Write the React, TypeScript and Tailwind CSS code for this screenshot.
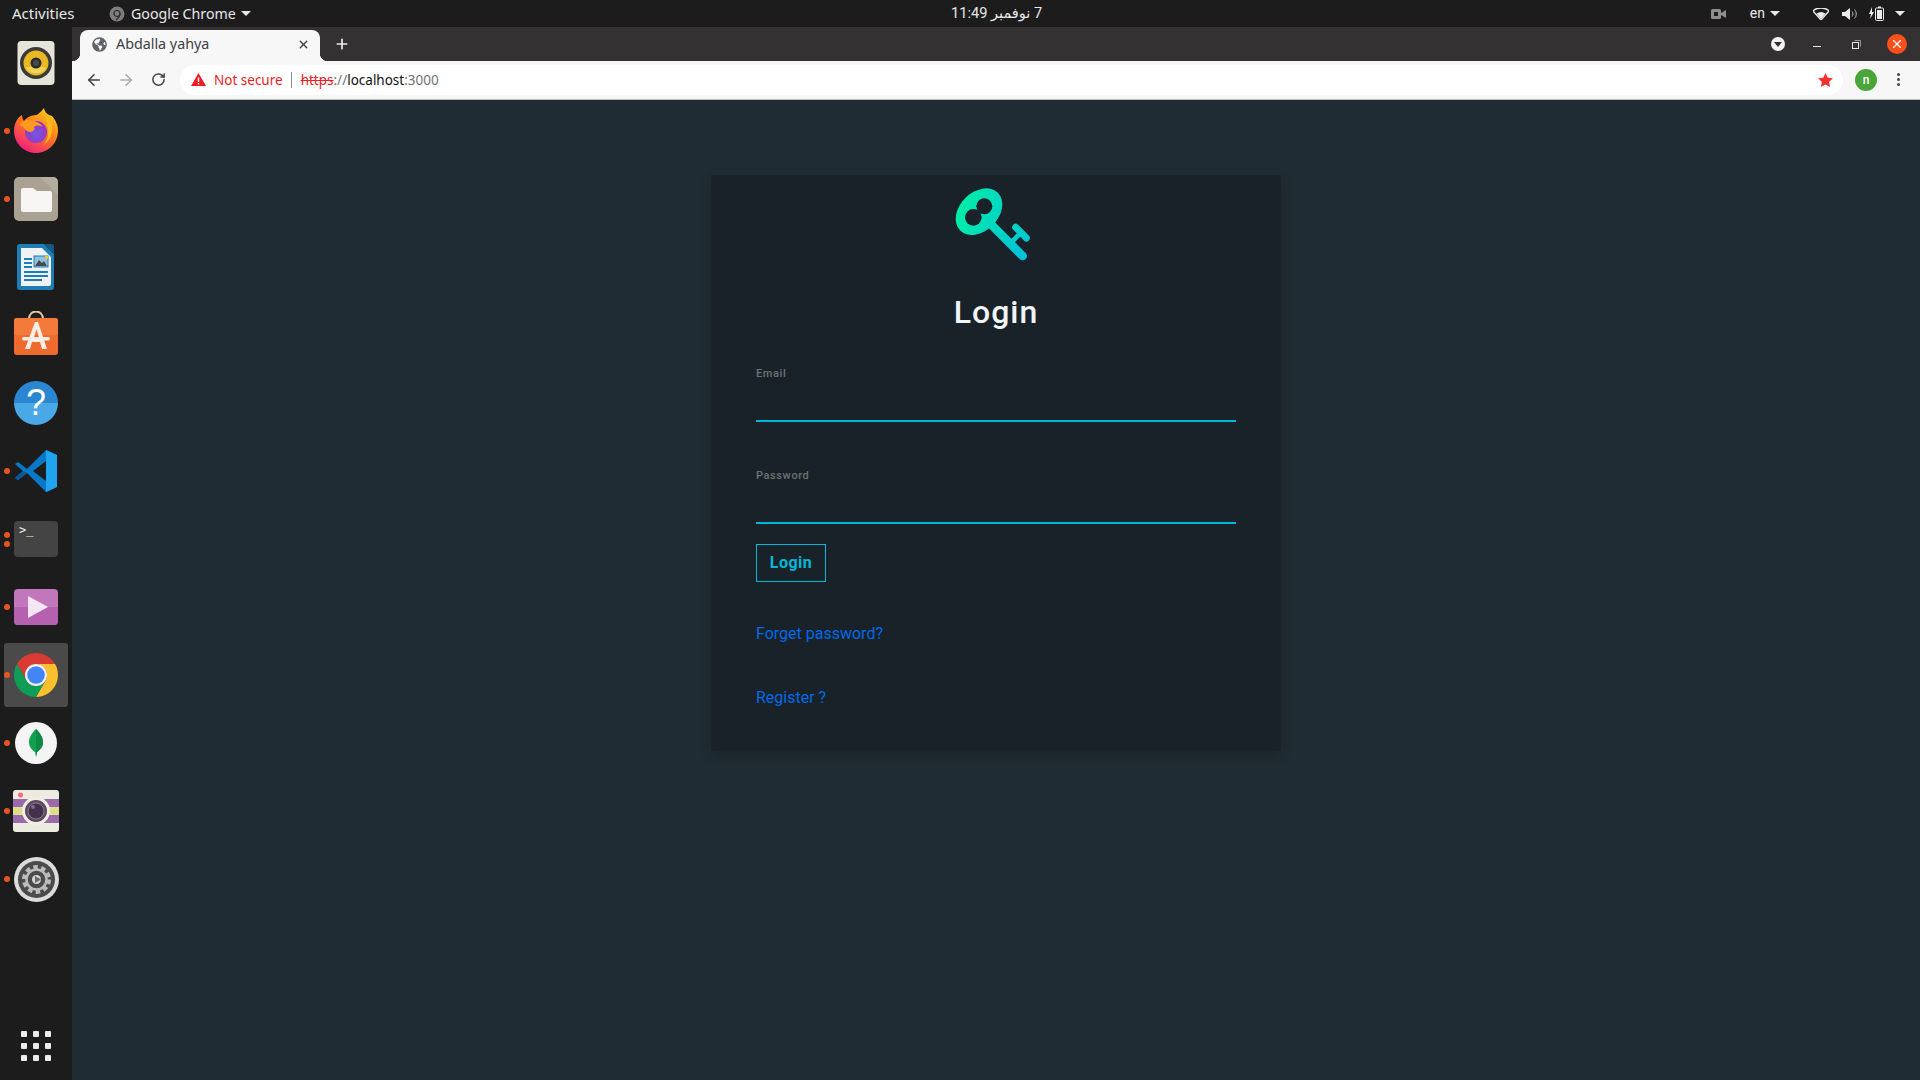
import React from "react";
import { FaGlobeAmericas } from "react-icons/fa";
import { ArrowLeft, ArrowRight, RotateCw, X, Plus } from "lucide-react";

const Caret = ({ className = "" }: { className?: string }) => (
  <svg width="10" height="5" viewBox="0 0 10 5" className={className}>
    <path d="M0 0h10L5 5z" fill="#e8e8e8" />
  </svg>
);

const Rhythmbox = () => (
  <svg width="44" height="44" viewBox="0 0 44 44">
    <rect x="3.5" y="0" width="37" height="44" rx="4" fill="#e6e3d9" />
    <circle cx="22" cy="22" r="16" fill="#3a3a3a" />
    <circle cx="22" cy="22" r="12.5" fill="#e8b923" />
    <path d="M12 26a11 11 0 0 0 20 0z" fill="#f3d25a" />
    <circle cx="22" cy="22" r="5.5" fill="#2b2b2b" />
    <circle cx="22" cy="22" r="3" fill="#4a4a4a" />
  </svg>
);

const Firefox = () => (
  <svg width="46" height="46" viewBox="0 0 46 46" className="-mt-[2px]">
    <defs>
      <linearGradient id="ff" x1="0.8" y1="0" x2="0.2" y2="1">
        <stop offset="0" stopColor="#ffd21f" />
        <stop offset="0.45" stopColor="#ff7a1a" />
        <stop offset="1" stopColor="#f0148c" />
      </linearGradient>
      <radialGradient id="ffp" cx="0.5" cy="0.6" r="0.6">
        <stop offset="0" stopColor="#6d5be0" />
        <stop offset="1" stopColor="#a02fc0" />
      </radialGradient>
    </defs>
    <path d="M31 1c1 5 4 7 8 8 4 5 6 9 6 15 0 12-10 22-22 22S1 36 1 24C1 17 4 11 9 8c0 3 1 5 2 6 3-4 8-6 13-6 2-2 5-4 7-7z" fill="url(#ff)" />
    <circle cx="23" cy="25" r="11" fill="url(#ffp)" />
    <path d="M6 18c4-5 10-6 15-4 4 1 7 3 9 6-4-2-7-2-9 0 1 2 0 4-3 5-3 0-6-2-7-4-2-2-3-3-5-3z" fill="#ff9a1f" />
    <path d="M33 8c4 4 7 9 6 16-1 7-4 11-9 14 4-4 6-9 5-15-1-6-2-10-2-15z" fill="#ffb81f" />
  </svg>
);

const Files = () => (
  <svg width="44" height="44" viewBox="0 0 44 44">
    <rect width="44" height="44" rx="5" fill="#a9a292" />
    <path d="M26 0h13a5 5 0 0 1 5 5v13L26 0z" fill="#b5ae9e" />
    <path d="M7 13a2 2 0 0 1 2-2h10l4 3h13a2 2 0 0 1 2 2v17a2 2 0 0 1-2 2H9a2 2 0 0 1-2-2z" fill="#f6f5f3" />
  </svg>
);

const Writer = () => (
  <svg width="38" height="46" viewBox="0 0 38 46">
    <path d="M3 0h24l10 10v33a3 3 0 0 1-3 3H3a3 3 0 0 1-3-3V3a3 3 0 0 1 3-3z" fill="#1c7eb5" />
    <path d="M4 4h21l9 9v27a2 2 0 0 1-2 2H4z" fill="#f0f1f3" />
    <path d="M27 0l10 10V2a2 2 0 0 0-2-2z" fill="#14577f" />
    <rect x="7" y="14" width="8" height="2" fill="#1c7eb5" />
    <rect x="7" y="18" width="8" height="2" fill="#1c7eb5" />
    <rect x="7" y="22" width="8" height="2" fill="#1c7eb5" />
    <rect x="17" y="12" width="14" height="11" fill="#8fc1e3" stroke="#1c7eb5" />
    <path d="M18 22l4-6 3 3 2-2 3 5z" fill="#4a4a4a" />
    <rect x="28" y="12" width="3" height="3" fill="#f2c230" />
    <rect x="7" y="27" width="24" height="2" fill="#1c7eb5" />
    <rect x="7" y="31" width="24" height="2" fill="#1c7eb5" />
    <rect x="7" y="35" width="18" height="2" fill="#1c7eb5" />
  </svg>
);

const Software = () => (
  <svg width="44" height="44" viewBox="0 0 44 44" className="-mt-[4px]">
    <path d="M15 8c0-10 14-10 14 0" fill="none" stroke="#e8c8a0" strokeWidth="2" />
    <path d="M3 7h38a3 3 0 0 1 3 3v31a3 3 0 0 1-3 3H3a3 3 0 0 1-3-3V10a3 3 0 0 1 3-3z" fill="#ef6a2e" />
    <path d="M0 24V10a3 3 0 0 1 3-3h38a3 3 0 0 1 3 3v14z" fill="#f47a3c" />
    <path d="M21 11h3l9 27h-5l-2-7h-8l-2 7h-5z M22.500 18l-3 10h6z" fill="#fbeee6" fillRule="evenodd" />
    <rect x="8" y="26" width="28" height="3.500" rx="1.700" fill="#fbeee6" />
  </svg>
);

const Help = () => (
  <div className="relative flex h-[44px] w-[44px] items-center justify-center overflow-hidden rounded-full bg-[linear-gradient(180deg,#2a86d0_0%,#2a86d0_50%,#49a8e6_50%,#49a8e6_100%)]">
    <span className="text-[36px] leading-none text-white [font-family:'Liberation_Sans',sans-serif]">?</span>
  </div>
);

const VSCode = () => (
  <svg width="44" height="44" viewBox="0 0 44 44">
    <path d="M32 1L13 20 4 13 1 15l8 7-8 7 3 2 9-7 19 19 11-5V6z" fill="#0a78c8" />
    <path d="M32 1l11 5v32l-11 5z" fill="#1fa5f0" />
    <path d="M32 12L19 22l13 10z" fill="#1c1c1c" />
    <path d="M1 29l8-7 4 2-9 7z" fill="#075a9a" />
  </svg>
);

const Terminal = () => (
  <div className="flex h-[36px] w-[44px] flex-col rounded-[4px] bg-[#444444] pl-[5px] pt-[2px]">
    <span className="text-[12px] leading-[14px] text-[#f0f0f0] [font-family:'DejaVu_Sans_Mono',monospace]">&gt;_</span>
  </div>
);

const Totem = () => (
  <svg width="44" height="36" viewBox="0 0 44 36">
    <rect width="44" height="36" rx="4" fill="#c277bd" />
    <path d="M0 18h44v14a4 4 0 0 1-4 4H4a4 4 0 0 1-4-4z" fill="#b561b0" />
    <path d="M14 7l20 11-20 11z" fill="#f5e6f3" />
  </svg>
);

const Chrome = () => (
  <svg width="44" height="44" viewBox="4 4 40 40">
    <path d="M6.680 14A20 20 0 0 1 41.320 14H24A10 10 0 0 0 15.340 29z" fill="#d93a32" />
    <path d="M41.320 14A20 20 0 0 1 24 44L32.660 29A10 10 0 0 0 24 14z" fill="#fbc02d" />
    <path d="M24 44A20 20 0 0 1 6.680 14L15.340 29A10 10 0 0 0 32.660 29z" fill="#0f9d58" />
    <circle cx="24" cy="24" r="10" fill="#f1f1f1" />
    <circle cx="24" cy="24" r="8" fill="#4285f4" />
  </svg>
);

const Mongo = () => (
  <svg width="42" height="42" viewBox="0 0 42 42">
    <circle cx="21" cy="21" r="21" fill="#f4f4f4" />
    <path d="M21 7c5 5 7 9 7 13 0 5-3 8-6 10l-1 5-1-5c-3-2-6-5-6-10 0-4 2-8 7-13z" fill="#12a150" />
    <path d="M21 7c5 5 7 9 7 13 0 5-3 8-6 10l-1 5z" fill="#0f8a44" />
  </svg>
);

const Camera = () => (
  <svg width="46" height="42" viewBox="0 0 46 42">
    <rect width="46" height="42" rx="3" fill="#ecebdf" />
    <rect y="9" width="46" height="8" fill="#9a6aad" />
    <rect y="17" width="46" height="8" fill="#e0dc8e" />
    <rect y="25" width="46" height="8" fill="#9a6aad" />
    <circle cx="7.500" cy="5" r="2.500" fill="#f76a78" />
    <circle cx="23" cy="21" r="14" fill="#f1efe2" />
    <circle cx="23" cy="21" r="11" fill="#5c4a60" />
    <circle cx="23" cy="21" r="8" fill="#43304c" stroke="#8d7895" strokeWidth="1" />
    <circle cx="20" cy="17" r="2" fill="#806b88" />
  </svg>
);

const Settings = () => (
  <svg width="45" height="45" viewBox="0 0 45 45">
    <circle cx="22.500" cy="22.500" r="22.500" fill="#dcdcdc" />
    <circle cx="22.500" cy="22.500" r="18.500" fill="#4b4b4b" />
    <circle cx="22.500" cy="22.500" r="12.500" fill="none" stroke="#bcbcbc" strokeWidth="4" strokeDasharray="4.500 3.400" />
    <circle cx="22.500" cy="22.500" r="10" fill="none" stroke="#bcbcbc" strokeWidth="2.500" />
    <circle cx="22.500" cy="22.500" r="4.500" fill="#d4d4d4" />
    <path d="M21 19l6 3.500-6 3.500z" fill="#6a6a6a" />
  </svg>
);

const Dot = ({ top }: { top: number }) => (
  <span className="absolute left-[4px] h-[6px] w-[6px] rounded-full bg-[#e95420]" style={{ top }} />
);

const dockItems: { icon: React.ReactNode; dots: number[]; active?: boolean }[] = [
  { icon: <Rhythmbox />, dots: [] },
  { icon: <Firefox />, dots: [31] },
  { icon: <Files />, dots: [31] },
  { icon: <Writer />, dots: [] },
  { icon: <Software />, dots: [] },
  { icon: <Help />, dots: [] },
  { icon: <VSCode />, dots: [31] },
  { icon: <Terminal />, dots: [27, 36] },
  { icon: <Totem />, dots: [31] },
  { icon: <Chrome />, dots: [31], active: true },
  { icon: <Mongo />, dots: [31] },
  { icon: <Camera />, dots: [31] },
  { icon: <Settings />, dots: [31] },
];

const Dock = () => (
  <aside className="flex w-[72px] shrink-0 flex-col bg-[#1c1c1c] pt-[2px]">
    {dockItems.map((it, i) => (
      <div key={i} className="relative flex h-[68px] items-center justify-center">
        {it.active && <span className="absolute left-[4px] top-[2px] h-[64px] w-[64px] rounded-[3px] bg-[#4a4a4a]" />}
        {it.dots.map((t) => (
          <Dot key={t} top={t} />
        ))}
        <div className="relative flex items-center justify-center">{it.icon}</div>
      </div>
    ))}
    <div className="mt-auto mb-[19px] grid grid-cols-3 gap-[6px] self-center">
      {Array.from({ length: 9 }).map((_, i) => (
        <span key={i} className="h-[6px] w-[6px] rounded-[1px] bg-[#ececec]" />
      ))}
    </div>
  </aside>
);

const TopBar = () => (
  <header className="relative flex h-[27px] shrink-0 items-center bg-[#1c1c1c] text-[14px] text-[#e8e8e8] [font-family:'Noto_Sans',sans-serif]">
    <span className="ml-[12px] w-[63px] whitespace-nowrap text-[15px]">Activities</span>
    <svg width="16" height="16" viewBox="0 0 16 16" className="ml-[34px]">
      <circle cx="8" cy="8" r="7.500" fill="#7d7d7d" />
      <circle cx="8" cy="7.500" r="3" fill="none" stroke="#2b2b2b" strokeWidth="1.200" />
      <path d="M11 7.500c0 3-2 5-4 6.500" fill="none" stroke="#2b2b2b" strokeWidth="1.200" />
    </svg>
    <span className="ml-[6px] whitespace-nowrap text-[14.200px]">Google Chrome</span>
    <Caret className="ml-[5px]" />
    <span dir="rtl" className="absolute left-[951px] whitespace-nowrap text-[14.600px] [font-family:'Roboto','DejaVu_Sans',sans-serif]">
      7 نوفمبر 11:49
    </span>
    <div className="ml-auto flex items-center">
      <svg width="15" height="10" viewBox="0 0 15 10">
        <rect width="10" height="10" rx="1.500" fill="#8e8e8e" />
        <rect x="3" y="3" width="4" height="4" fill="#1c1c1c" />
        <path d="M10 4l5-3v8l-5-3z" fill="#8e8e8e" />
      </svg>
      <span className="ml-[24px] text-[14px] [font-family:'Roboto',sans-serif]">en</span>
      <Caret className="ml-[5px]" />
      <svg width="16" height="12" viewBox="0 0 16 12" className="ml-[33px]">
        <path d="M0 3c4-4 12-4 16 0l-8 9z" fill="none" stroke="#ececec" strokeWidth="1.400" />
        <path d="M3.500 5.500c3-2 6-2 9 0L8 11z" fill="#ececec" />
      </svg>
      <svg width="15" height="12" viewBox="0 0 15 12" className="ml-[13px]">
        <path d="M0 4h3l5-4v12l-5-4H0z" fill="#ececec" />
        <path d="M10 3.500c1.300 1.500 1.300 3.500 0 5M12.500 1.500c2.300 2.500 2.300 6.500 0 9" fill="none" stroke="#bdbdbd" strokeWidth="1" />
      </svg>
      <svg width="15" height="15" viewBox="0 0 15 15" className="ml-[12px]">
        <path d="M3 1L0 8h2l-1 5 4-7H3z" fill="#ececec" />
        <rect x="6.500" y="2" width="8" height="12.500" rx="1" fill="none" stroke="#ececec" />
        <rect x="9" y="0.500" width="3" height="1.500" fill="#ececec" />
        <rect x="8" y="4" width="5" height="9" fill="#ececec" />
      </svg>
      <Caret className="ml-[11px] mr-[15px]" />
    </div>
  </header>
);

const TabStrip = () => (
  <div className="flex h-[34px] shrink-0 items-end bg-[#333131] pl-[8px]">
    <div className="relative flex h-[31px] w-[240px] items-center rounded-t-[8px] bg-[#f7f7f7] pb-[3px] pl-[12px] text-[#3c4043] [font-family:'Noto_Sans',sans-serif]">
      <span className="absolute bottom-0 left-[-8px] h-[8px] w-[8px] bg-[radial-gradient(circle_at_0_0,#333131_8px,#f7f7f7_8.500px)]" />
      <span className="absolute bottom-0 right-[-8px] h-[8px] w-[8px] bg-[radial-gradient(circle_at_100%_0,#333131_8px,#f7f7f7_8.500px)]" />
      <FaGlobeAmericas size={15} color="#5f6368" />
      <span className="ml-[9px] whitespace-nowrap text-[14.300px]">Abdalla yahya</span>
      <X size={13} strokeWidth={2.500} color="#444" className="ml-auto mr-[10px]" />
    </div>
    <Plus size={16} strokeWidth={2.500} color="#f0f0f0" className="mb-[9px] ml-[14px]" />
    <div className="mb-[7px] ml-auto flex items-center">
      <div className="ml-px flex h-[14px] w-[14px] items-center justify-center rounded-full bg-[#f4f4f4]">
        <svg width="8" height="5" viewBox="0 0 8 5"><path d="M0 0h8L4 5z" fill="#333131" /></svg>
      </div>
      <span className="ml-[28px] mt-[5px] h-px w-[8px] bg-[#e8e8e8]" />
      <svg width="9" height="9" viewBox="0 0 9 9" className="ml-[31px]">
        <rect x="0.500" y="2.500" width="6" height="6" fill="none" stroke="#e8e8e8" />
        <path d="M2.500 0.500h6v6" fill="none" stroke="#9a9a9a" />
      </svg>
      <div className="ml-[26px] mr-[13px] flex h-[20px] w-[20px] items-center justify-center rounded-full bg-[#f9501c]">
        <X size={14} strokeWidth={2} color="#fff" />
      </div>
    </div>
  </div>
);

const ToolBar = () => (
  <div className="flex h-[39px] shrink-0 items-center border-b border-[#bdbdbd] bg-[#f7f7f7] pb-px [font-family:'Noto_Sans',sans-serif]">
    <ArrowLeft size={18} strokeWidth={2.200} color="#444" className="ml-[13px]" />
    <ArrowRight size={18} strokeWidth={2.200} color="#aaa" className="ml-[14px]" />
    <RotateCw size={15} strokeWidth={2.400} color="#444" className="ml-[16px]" />
    <div className="ml-[14px] flex h-[30px] w-[1663px] items-center rounded-full bg-white pl-[10px]">
      <svg width="15" height="13" viewBox="0 0 15 13" className="ml-[1px]">
        <path d="M7.500 0L15 13H0z" fill="#ee1c25" />
        <rect x="6.800" y="4.500" width="1.400" height="4.500" fill="#fff" />
        <rect x="6.800" y="10" width="1.400" height="1.400" fill="#fff" />
      </svg>
      <span className="ml-[8px] mt-px whitespace-nowrap text-[13.500px] text-[#ef1c25]">Not secure</span>
      <span className="ml-[8px] h-[16px] w-px bg-[#8a8a8a]" />
      <span className="ml-[9px] mt-px whitespace-nowrap text-[13.500px] text-[#6f7378]">
        <span className="text-[#ef1c25] line-through">https</span>
        ://
        <span className="text-[#111]">localhost</span>
        :3000
      </span>
      <svg width="15" height="14" viewBox="0 0 24 23" className="ml-auto mr-[10px]">
        <path d="M12 0l3.700 7.800 8.300 1-6.100 5.800 1.600 8.400L12 18.900 4.500 23l1.600-8.400L0 8.800l8.300-1z" fill="#f4302f" />
      </svg>
    </div>
    <div className="ml-[12px] flex h-[22px] w-[22px] items-center justify-center rounded-full bg-[#4ca53b] text-[12px] font-medium text-white [font-family:'Roboto',sans-serif]">
      n
    </div>
    <div className="ml-[20px] flex flex-col gap-[2px]">
      <span className="h-[3px] w-[3px] rounded-full bg-[#444]" />
      <span className="h-[3px] w-[3px] rounded-full bg-[#444]" />
      <span className="h-[3px] w-[3px] rounded-full bg-[#444]" />
    </div>
  </div>
);

const Key = () => (
  <svg width="120" height="100" viewBox="18 0 360 300">
    <defs>
      <linearGradient id="keyg" gradientUnits="userSpaceOnUse" x1="140" y1="40" x2="260" y2="260">
        <stop offset="0" stopColor="#00eea8" />
        <stop offset="1" stopColor="#00c0da" />
      </linearGradient>
    </defs>
    <ellipse cx="147" cy="110" rx="80" ry="58" transform="rotate(-45 147 110)" fill="url(#keyg)" />
    <g stroke="url(#keyg)" fill="none">
      <path d="M185 150L278 243" strokeWidth="26" strokeLinecap="round" />
      <path d="M257 157L289 189" strokeWidth="21" strokeLinecap="round" />
      <path d="M274 172L245 201" strokeWidth="14" />
    </g>
    <circle cx="130" cy="127" r="25" fill="#192228" />
    <circle cx="163" cy="94" r="24" fill="#192228" />
  </svg>
);

const Field = ({ label, type, className = "" }: { label: string; type: string; className?: string }) => (
  <label className={"block " + className}>
    <span className="block h-[16px] pt-px text-[11px] font-medium leading-[16px] tracking-[0.6px] text-[#6e7275]">{label}</span>
    <input type={type} className="block h-[41px] w-full border-b-2 border-[#00b8d9] bg-transparent outline-none" />
  </label>
);

const LoginCard = () => (
  <section className="mt-[75px] flex h-[576px] w-[570px] flex-col rounded-[2px] bg-[#192228] shadow-[0_4px_12px_rgba(0,0,0,0.18)] [font-family:'Roboto',sans-serif]">
    <div className="flex justify-center">
      <Key />
    </div>
    <h1 className="mt-[13px] text-center text-[32px] font-medium leading-[48px] tracking-[1px] text-[#f1f4f8]">Login</h1>
    <form className="mt-[29px] flex flex-col items-start px-[45px]">
      <Field label="Email" type="email" className="w-full" />
      <Field label="Password" type="password" className="mt-[45px] w-full" />
      <button type="button" className="mt-[20px] h-[38px] w-[70px] border border-[#00b8d9] text-[16px] font-bold tracking-[0.5px] text-[#00b8d9]">
        Login
      </button>
      <a className="mt-[40px] block text-[16px] leading-[24px] text-[#0069e8]">Forget password?</a>
      <a className="mt-[40px] block text-[16px] leading-[24px] text-[#0069e8]">Register ?</a>
    </form>
  </section>
);

export default function App() {
  return (
    <div className="flex h-screen w-full flex-col overflow-hidden bg-[#202c33]">
      <TopBar />
      <div className="flex min-h-0 flex-1">
        <Dock />
        <div className="flex min-w-0 flex-1 flex-col">
          <TabStrip />
          <ToolBar />
          <main className="flex flex-1 justify-center bg-[#202c33]">
            <LoginCard />
          </main>
        </div>
      </div>
    </div>
  );
}
